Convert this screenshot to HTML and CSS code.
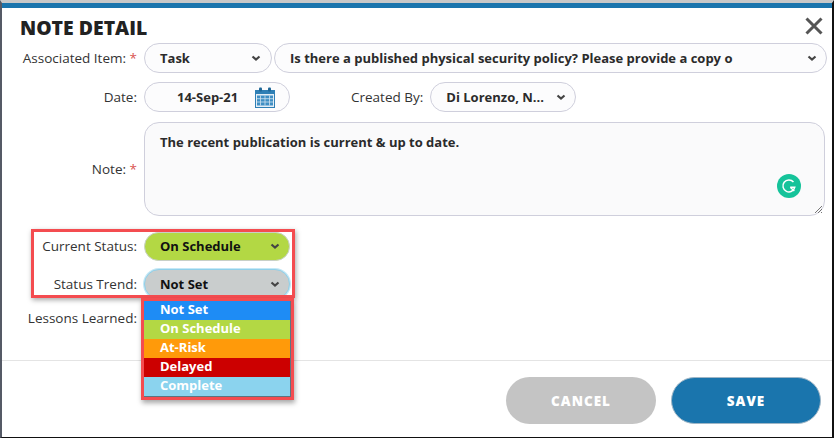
FILE: index.html
```html
<!DOCTYPE html>
<html lang="en">
<head>
<meta charset="utf-8">
<title>Note Detail</title>
<link rel="stylesheet" href="styles.css">
</head>
<body>
<div class="dialog">
  <header class="head">
    <h1 class="title">NOTE DETAIL</h1>
    <svg class="close" width="20" height="20" viewBox="0 0 20 20"><path d="M2.500 2.500L17.500 17.500M17.500 2.500L2.500 17.500" stroke="#555" stroke-width="3" fill="none"/></svg>
  </header>
  <div class="form">
    <div class="row row-assoc">
      <label class="lbl">Associated Item: <span class="req">*</span></label>
      <div class="sel w-task"><span>Task</span><svg class="chev" width="10" height="7" viewBox="0 0 10 7"><path d="M1.500 1.500L5 4.500L8.500 1.500" stroke="#444" stroke-width="2.200" fill="none"/></svg></div>
      <div class="sel grow"><span>Is there a published physical security policy? Please provide a copy o</span><svg class="chev" width="10" height="7" viewBox="0 0 10 7"><path d="M1.500 1.500L5 4.500L8.500 1.500" stroke="#444" stroke-width="2.200" fill="none"/></svg></div>
    </div>
    <div class="row row-date">
      <label class="lbl">Date:</label>
      <div class="sel w-date"><span class="date-val">14-Sep-21</span>
        <svg class="cal" width="20" height="21" viewBox="0 0 20 21"><rect x="0.500" y="3.500" width="19" height="17" fill="#e4eef6" stroke="#2f7fb5"/><rect x="0" y="3" width="20" height="4" fill="#2f7fb5"/><rect x="4" y="0.500" width="3" height="4" rx="1" fill="#1f6797"/><rect x="13" y="0.500" width="3" height="4" rx="1" fill="#1f6797"/><path d="M2 8.500h16v10H2z" fill="#3f8fc4"/><path d="M5.500 8.500v10M10 8.500v10M14.500 8.500v10M2 11.700h16M2 15h16" stroke="#cfe2f0" stroke-width="0.800" fill="none"/></svg>
      </div>
      <label class="lbl-created">Created By:</label>
      <div class="sel w-user"><span>Di Lorenzo, N...</span><svg class="chev" width="10" height="7" viewBox="0 0 10 7"><path d="M1.500 1.500L5 4.500L8.500 1.500" stroke="#444" stroke-width="2.200" fill="none"/></svg></div>
    </div>
    <div class="row row-note">
      <label class="lbl">Note: <span class="req">*</span></label>
      <div class="note">
        <span>The recent publication is current &amp; up to date.</span>
        <svg class="grammarly" width="24" height="24" viewBox="0 0 24 24"><circle cx="12" cy="12" r="12" fill="#15c39a"/><path d="M16.500 8A6 6 0 1 0 17.800 13.200H13.200" stroke="#fff" stroke-width="1.500" fill="none"/><path d="M13.500 13.500L17.300 17" stroke="#fff" stroke-width="1.500" fill="none"/></svg>
        <svg class="resize" width="9" height="9" viewBox="0 0 9 9"><path d="M1 8L8 1M4 8L8 4M7 8L8 7" stroke="#555" stroke-width="0.800" fill="none"/></svg>
      </div>
    </div>
    <div class="row row-status">
      <label class="lbl">Current Status:</label>
      <div class="sel w-status st-green"><span>On Schedule</span><svg class="chev" width="10" height="7" viewBox="0 0 10 7"><path d="M1.500 1.500L5 4.500L8.500 1.500" stroke="#444" stroke-width="2.200" fill="none"/></svg></div>
    </div>
    <div class="row row-trend">
      <label class="lbl">Status Trend:</label>
      <div class="sel w-status st-gray"><span>Not Set</span><svg class="chev" width="10" height="7" viewBox="0 0 10 7"><path d="M1.500 1.500L5 4.500L8.500 1.500" stroke="#444" stroke-width="2.200" fill="none"/></svg></div>
    </div>
    <div class="row row-lessons">
      <label class="lbl">Lessons Learned:</label>
    </div>
  </div>
  <footer class="foot">
    <button class="btn btn-cancel" type="button">CANCEL</button>
    <button class="btn btn-save" type="button">SAVE</button>
  </footer>
  <div class="mark mark-status"></div>
  <ul class="menu">
    <li class="opt o-blue">Not Set</li>
    <li class="opt o-green">On Schedule</li>
    <li class="opt o-orange">At-Risk</li>
    <li class="opt o-red">Delayed</li>
    <li class="opt o-sky">Complete</li>
  </ul>
</div>
</body>
</html>
```
FILE: styles.css
```css
* { box-sizing: border-box; }
html, body { margin: 0; height: 100%; }
body { font-family: "Open Sans", sans-serif; font-size: 13px; color: #333; background: #fff; overflow: hidden; }
.dialog {
  position: relative; width: 834px; height: 438px;
  display: flex; flex-direction: column;
  background: #fff;
  border-top: 3px solid #c8c8c8;
  border-left: 2px solid #555a66;
  border-right: 2px solid #111;
  border-bottom: 1px solid #111;
}
.dialog::before { content: ""; display: block; height: 5px; background: #1a75ad; flex: none; }
.head { display: flex; justify-content: space-between; align-items: flex-start; padding: 9px 8px 0 18px; height: 35px; flex: none; }
.title { margin: 0; font-size: 19.400px; font-weight: 800; line-height: 22px; color: #222; }
.close { margin-top: -1px; }
.form { flex: none; display: flex; flex-direction: column; }
.row { display: flex; align-items: center; }
.lbl { width: 135px; text-align: right; margin-right: 7px; flex: none; white-space: nowrap; color: #333; font-size: 13.500px; }
.req { color: #d9534f; }
.sel {
  display: flex; align-items: center; justify-content: space-between;
  height: 30px; border: 1px solid #cfcfdc; border-radius: 15px;
  padding: 0 10px 0 15px; background: #fcfcfd; font-weight: 700; color: #2b2b2b; white-space: nowrap; flex: none;
}
.grow { flex: 1; margin-left: 2px; margin-right: 5px; padding-right: 9px; }
.w-task { width: 128px; }
.row-assoc { height: 30px; }
.row-date { height: 30px; margin-top: 9px; }
.w-date { width: 146px; padding-left: 32px; padding-right: 14px; }
.lbl-created { margin-left: 61px; margin-right: 7px; white-space: nowrap; font-size: 13.500px; }
.w-user { width: 146px; padding-right: 9px; }
.cal { flex: none; }
.row-note { margin-top: 10px; align-items: center; }
.note { position: relative; width: 681px; height: 94px; border: 1px solid #cfcfdc; border-radius: 15px; background: #fafafb; padding: 10px 15px; font-weight: 700; color: #2b2b2b; }
.grammarly { position: absolute; right: 23px; bottom: 17px; }
.resize { position: absolute; right: 1px; bottom: 1px; }
.row-status { margin-top: 16px; height: 28px; }
.w-status { width: 146px; padding-right: 9px; }
.row-status .sel { height: 29px; border-color: #c8d0c8; }
.st-green { background: #b3d844; color: #111; }
.st-gray { background: #c9cdcd; color: #111; border: 1px solid #8fd0ea; box-shadow: 0 0 0 1px #c4e8f6; }
.row-trend { margin-top: 9px; height: 30px; }
.row-lessons { margin-top: 7px; height: 24px; }
.foot { position: absolute; left: 0; right: 0; bottom: 0; top: 357px; border-top: 1px solid #e4e4e4; display: flex; justify-content: flex-end; align-items: flex-start; padding: 16px 11px 0 0; gap: 15px; }
.btn { height: 47px; border: none; border-radius: 24px; font-family: inherit; font-size: 13.500px; font-weight: 800; letter-spacing: 1px; color: #fff; }
.btn-cancel { width: 150px; background: #c4c4c4; }
.btn-save { width: 150px; background: #1a75ad; border: 1px solid #9fb6c6; }
.mark { position: absolute; border: 3px solid #f44c50; box-shadow: 1px 2px 5px rgba(0,0,0,.35); pointer-events: none; }
.mark-status { left: 29px; top: 226px; width: 264px; height: 69px; }
.menu { position: absolute; left: 139px; top: 295px; width: 153px; height: 102px; margin: 0; padding: 0; list-style: none; border: 3px solid #f44c50; box-shadow: 1px 3px 5px rgba(0,0,0,.35); background: linear-gradient(to left, #5e7480 1px, #fff 1px); }
.opt { height: 19px; padding-left: 16px; margin-right: 1px; font-weight: 700; line-height: 16px; color: #fff; white-space: nowrap; }
.o-blue { background: #1e8cf5; }
.o-green { background: #b3d844; }
.o-orange { background: #ff9a0a; }
.o-red { background: #cc0000; }
.o-sky { background: #8bd3ee; }
.menu::after { content: ""; display: block; height: 1px; margin-right: 1px; background: #5e7480; }
```
